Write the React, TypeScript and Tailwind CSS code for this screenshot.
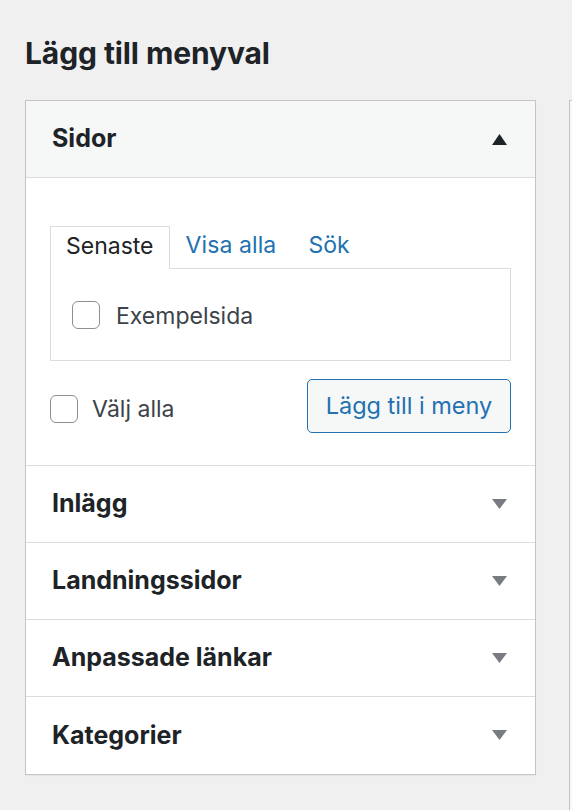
import React, { useState } from "react";

const sections = ["Inlägg", "Landningssidor", "Anpassade länkar", "Kategorier"];
const tabs = ["Senaste", "Visa alla", "Sök"];

const Arrow = ({ up, className }: { up?: boolean; className: string }) => (
  <svg width="15" height="11" viewBox="0 0 15 11" className={className}>
    {up ? <path d="M7.5 0 L15 11 L0 11 Z" fill="currentColor" /> : <path d="M0 0 L15 0 L7.5 10 Z" fill="currentColor" />}
  </svg>
);

const Checkbox = () => (
  <span className="block w-[28px] h-[28px] shrink-0 rounded-[6px] border border-[#8c8f94] bg-white" />
);

const App: React.FC = () => {
  const [activeTab, setActiveTab] = useState("Senaste");

  return (
    <div className="min-h-screen bg-[#f0f0f1] font-['Inter','Noto_Sans',sans-serif] text-[#1d2327] pt-[34px]">
      <h2 className="px-[25px] text-[30px] leading-[38px] font-bold tracking-[-0.1px]">Lägg till menyval</h2>

      <div className="flex items-start pt-[28px]">
        <div className="ml-[25px] w-[511px] bg-white border border-[#c3c4c7] shadow-[0_1px_1px_rgba(0,0,0,0.04)]">
          {/* open section */}
          <div className="h-[77px] flex items-center justify-between pl-[26px] pr-[28px] bg-[#f6f7f7] border-b border-[#dcdcde]">
            <h3 className="text-[25px] font-bold">Sidor</h3>
            <Arrow up className="text-[#1d2327]" />
          </div>

          <div className="h-[288px] border-b border-[#dcdcde] px-[24px] pt-[47px]">
            <div className="flex items-end">
              {tabs.map((t) =>
                t === activeTab ? (
                  <button
                    key={t}
                    onClick={() => setActiveTab(t)}
                    className="relative z-10 -mb-px h-[43px] px-[15px] pb-[3px] bg-white border border-b-0 border-[#dcdcde] text-[23px] text-[#1d2327]"
                  >
                    {t}
                  </button>
                ) : (
                  <button
                    key={t}
                    onClick={() => setActiveTab(t)}
                    className="h-[43px] px-[16px] pb-[3px] text-[23px] tracking-[0.1px] text-[#2271b1]"
                  >
                    {t}
                  </button>
                )
              )}
            </div>
            <div className="h-[93px] border border-[#dcdcde] flex items-center px-[21px] gap-[16px]">
              <Checkbox />
              <span className="text-[23px] text-[#3c434a] mt-[3px]">Exempelsida</span>
            </div>
            <div className="flex items-center justify-between mt-[18px]">
              <label className="flex items-center gap-[14px] mt-[6px]">
                <Checkbox />
                <span className="text-[23px] text-[#3c434a]">Välj alla</span>
              </label>
              <button className="h-[54px] w-[204px] rounded-[5px] border border-[#2271b1] bg-[#f6f7f7] text-[23.5px] text-[#2271b1]">
                Lägg till i meny
              </button>
            </div>
          </div>

          {sections.map((s, i) => (
            <div
              key={s}
              className={`h-[77px] flex items-center justify-between pl-[26px] pr-[28px] ${
                i < sections.length - 1 ? "border-b border-[#dcdcde]" : ""
              }`}
            >
              <h3 className="text-[25px] font-bold">{s}</h3>
              <Arrow className="text-[#787c82]" />
            </div>
          ))}
        </div>

        <div className="ml-[33px] flex-1 h-[720px] bg-[#f6f7f7] border-l border-t border-[#c3c4c7]" />
      </div>
    </div>
  );
};

export default App;
